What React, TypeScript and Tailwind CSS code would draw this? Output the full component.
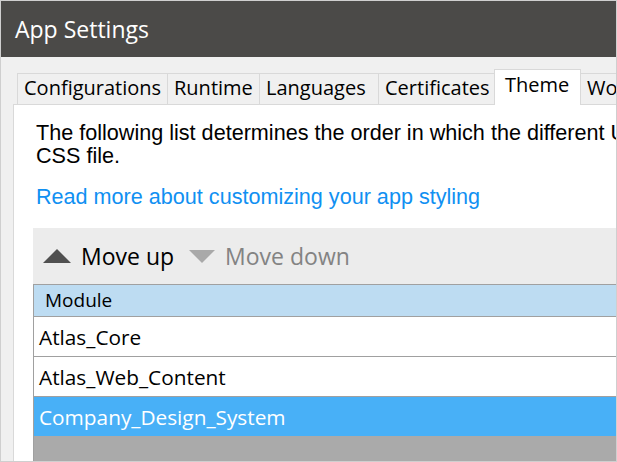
import React from 'react';

const tabs = [
    { label: 'Configurations', w: 'w-[151px]' },
    { label: 'Runtime', w: 'w-[93px]' },
    { label: 'Languages', w: 'w-[120px]' },
    { label: 'Certificates', w: 'w-[117px]' },
    { label: 'Theme', w: 'w-[87px]' },
    { label: 'Workflows', w: 'w-[110px]' },
    { label: 'Miscellaneous', w: 'w-[140px]' },
];

const modules = ['Atlas_Core', 'Atlas_Web_Content', 'Company_Design_System'];

export default function App() {
    const active = 'Theme';
    const selected = 'Company_Design_System';

    return (
        <div className="w-[617px] h-[462px] box-border border border-[#cfcfcf] bg-[#f0f0f0] overflow-hidden flex flex-col font-['Open_Sans',sans-serif]">
            {/* Title bar */}
            <div className="h-[56px] shrink-0 bg-[#4b4a48] flex items-center pl-[14px]">
                <span className="text-[23px] text-white">App Settings</span>
            </div>

            <div className="flex-1 flex flex-col pl-[12px] pt-[12px] min-h-0">
                {/* Tabs */}
                <div className="flex items-end pl-[4px] whitespace-nowrap">
                    {tabs.map((t) =>
                        t.label === active ? (
                            <div
                                key={t.label}
                                className={`${t.w} shrink-0 relative z-10 -mb-px -ml-px h-[36px] pl-[10px] pt-[1px] bg-white border border-b-0 border-[#d9d9d9] text-[20px] leading-[27px] text-black`}
                            >
                                {t.label}
                            </div>
                        ) : (
                            <div
                                key={t.label}
                                className={`${t.w} shrink-0 -ml-px first:ml-0 h-[31px] pl-[6px] bg-[#f0f0f0] border border-b-0 border-[#d9d9d9] text-[20px] leading-[27px] text-black`}
                            >
                                {t.label}
                            </div>
                        )
                    )}
                </div>

                {/* Panel */}
                <div className="flex-1 w-[900px] bg-white border-t border-l border-[#d9d9d9] pl-[19px] pt-[16px] flex flex-col min-h-0">
                    <p className="pl-[3px] font-['Liberation_Sans',Arial,sans-serif] text-[21.6px] leading-[23px] text-black whitespace-nowrap">
                        The following list determines the order in which the different UI resource modules are combined into a single
                        <br />
                        CSS file.
                    </p>
                    <a className="mt-[18px] pl-[3px] font-['Liberation_Sans',Arial,sans-serif] text-[21.6px] leading-[23px] text-[#1090f2] cursor-pointer">
                        Read more about customizing your app styling
                    </a>

                    {/* Toolbar */}
                    <div className="mt-[20px] h-[56px] shrink-0 bg-[#ececec] flex items-center pl-[10px]">
                        <button className="flex items-center gap-[10px] text-[23px] text-black">
                            <svg width="28" height="14" viewBox="0 0 28 14">
                                <polygon points="14,0 28,14 0,14" fill="#505050" />
                            </svg>
                            <span className="leading-[30px]">Move up</span>
                        </button>
                        <button className="ml-[15px] flex items-center gap-[10px] text-[23px] text-[#838383]">
                            <svg width="26" height="13" viewBox="0 0 26 13">
                                <polygon points="0,0 26,0 13,13" fill="#a9a9a9" />
                            </svg>
                            <span className="leading-[30px]">Move down</span>
                        </button>
                    </div>

                    {/* Table */}
                    <div className="flex-1 flex flex-col border-t border-l border-[#a0a0a0] bg-[#aaaaaa] min-h-0">
                        <div className="h-[32px] shrink-0 bg-[#bddcf2] border-b border-[#a0a0a0] flex items-center pl-[11px] text-[19px] text-black">
                            Module
                        </div>
                        {modules.map((m) => (
                            <div
                                key={m}
                                className={
                                    m === selected
                                        ? 'h-[39px] shrink-0 bg-[#48b0f7] flex items-center pl-[5px] pt-[2px] text-[20.8px] text-white'
                                        : 'h-[40px] shrink-0 bg-white border-b border-[#a0a0a0] flex items-center pl-[5px] pt-[2px] text-[20.8px] text-black'
                                }
                            >
                                {m}
                            </div>
                        ))}
                    </div>
                </div>
            </div>
        </div>
    );
}
